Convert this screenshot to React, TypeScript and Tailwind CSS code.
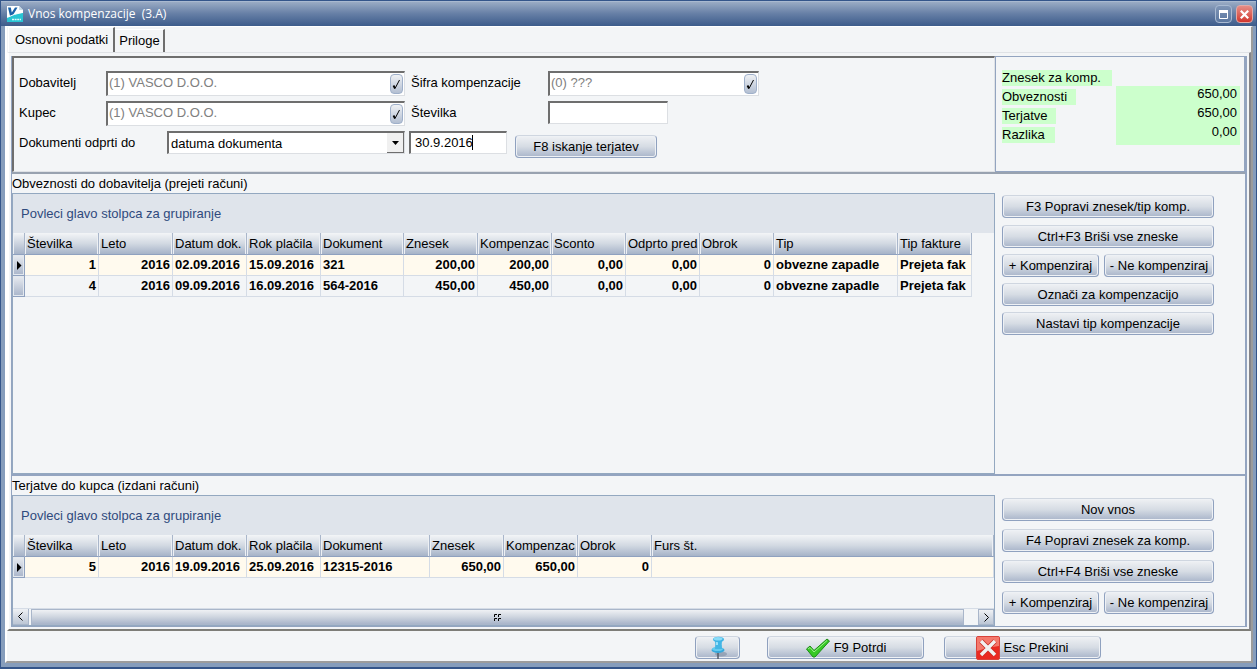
import type { ReactNode } from "react";
import clsx from "clsx";

type Column = { title: string; width: string; right?: boolean };

const payableColumns: Column[] = [
  { title: "Številka", width: "w-[74px]", right: true },
  { title: "Leto", width: "w-[74px]", right: true },
  { title: "Datum dok.", width: "w-[74px]" },
  { title: "Rok plačila", width: "w-[74px]" },
  { title: "Dokument", width: "w-[83px]" },
  { title: "Znesek", width: "w-[74px]", right: true },
  { title: "Kompenzac", width: "w-[74px]", right: true },
  { title: "Sconto", width: "w-[74px]", right: true },
  { title: "Odprto pred", width: "w-[74px]", right: true },
  { title: "Obrok", width: "w-[74px]", right: true },
  { title: "Tip", width: "w-[124px]" },
  { title: "Tip fakture", width: "w-[74px]" },
];

const payableRows = [
  ["1", "2016", "02.09.2016", "15.09.2016", "321", "200,00", "200,00", "0,00", "0,00", "0", "obvezne zapadle", "Prejeta fak"],
  ["4", "2016", "09.09.2016", "16.09.2016", "564-2016", "450,00", "450,00", "0,00", "0,00", "0", "obvezne zapadle", "Prejeta fak"],
];

const receivableColumns: Column[] = [
  { title: "Številka", width: "w-[74px]", right: true },
  { title: "Leto", width: "w-[74px]", right: true },
  { title: "Datum dok.", width: "w-[74px]" },
  { title: "Rok plačila", width: "w-[74px]" },
  { title: "Dokument", width: "w-[109px]" },
  { title: "Znesek", width: "w-[74px]", right: true },
  { title: "Kompenzac", width: "w-[74px]", right: true },
  { title: "Obrok", width: "w-[74px]", right: true },
  { title: "Furs št.", width: "w-auto" },
];

const receivableRows = [
  ["5", "2016", "19.09.2016", "25.09.2016", "12315-2016", "650,00", "650,00", "0", ""],
];

const sunken =
  "border-t-2 border-l-2 border-r border-b border-t-[#6e6e6e] border-l-[#6e6e6e] border-r-[#dcdfe3] border-b-[#dcdfe3] bg-white";

function Button({ children, className, label }: { children: ReactNode; className?: string; label?: string }) {
  return (
    <button
      type="button"
      aria-label={label}
      className={clsx(
        "flex h-[23px] items-center justify-center whitespace-nowrap rounded border border-[#8fa1bf] border-t-[#cfd6e0] bg-gradient-to-b from-[#eff1f4] via-[#d6dce4] to-[#a9b5ca] shadow-[inset_0_0_0_1px_#eef1f5]",
        className
      )}
    >
      {children}
    </button>
  );
}

function Lookup({ id, value, className }: { id: string; value: string; className: string }) {
  return (
    <div className={clsx("flex h-[25px] pr-px", sunken, className)}>
      <input id={id} defaultValue={value} className="h-[18px] min-w-0 flex-1 pl-px text-[#808080] outline-none" />
      <button
        type="button"
        aria-label="Izberi"
        className="mt-px flex h-5 w-[13px] items-center justify-center rounded border border-[#9fb0ca] bg-gradient-to-b from-[#eff1f4] to-[#b3bfd2]"
      >
        <svg width="9" height="13" viewBox="0 0 9 13" fill="none" stroke="#000">
          <path d="M3 10.5 7.500 2" />
          <path d="M1.500 7.500 3 10.500" strokeWidth="1.800" />
        </svg>
      </button>
    </div>
  );
}

function Grid({ columns, rows, label, className }: { columns: Column[]; rows: string[][]; label: string; className: string }) {
  return (
    <table aria-label={label} className={clsx("table-fixed border-separate border-spacing-0", className)}>
      <colgroup>
        <col className="w-3" />
        {columns.map((c) => (
          <col key={c.title} className={c.width} />
        ))}
      </colgroup>
      <thead>
        <tr>
          <th className="h-[22px] border-b border-r border-b-[#8fa1bf] border-r-[#a9b6ca] bg-gradient-to-b from-[#f3f5f7] to-[#a6b3c8] p-0 shadow-[inset_1px_0_0_#edf0f4]"></th>
          {columns.map((c) => (
            <th
              key={c.title}
              className="h-[22px] overflow-hidden whitespace-nowrap border-b border-r border-b-[#8fa1bf] border-r-[#a9b6ca] bg-gradient-to-b from-[#f3f5f7] via-[#d2d9e2] to-[#a6b3c8] p-0 pl-0.5 text-left font-normal shadow-[inset_-1px_0_0_#edf0f4,inset_1px_0_0_#edf0f4]"
            >
              {c.title}
            </th>
          ))}
        </tr>
      </thead>
      <tbody>
        {rows.map((row, i) => (
          <tr key={row[0]} className={i === 0 ? "bg-[#fffaee]" : "bg-[#f3f5f7]"}>
            <td className="h-[21px] border-b border-r border-[#8fa1bf] bg-gradient-to-b from-[#e9ecf1] to-[#a9b5ca] p-0 shadow-[inset_0_0_0_1px_#e3e8ee]">
              {i === 0 && (
                <svg width="11" height="11" viewBox="0 0 11 11">
                  <path d="M4 1v9l4.500-4.500z" />
                </svg>
              )}
            </td>
            {row.map((cell, j) => (
              <td
                key={columns[j].title}
                className={clsx(
                  "h-[21px] overflow-hidden whitespace-nowrap border-b border-r border-[#d5dce6] p-0 font-bold",
                  columns[j].right ? "pr-0.5 text-right" : "pl-0.5"
                )}
              >
                {cell}
              </td>
            ))}
          </tr>
        ))}
      </tbody>
    </table>
  );
}

function GroupBar() {
  return <div className="flex h-[39px] items-center bg-[#dfe4eb] pl-2 text-[#2f4a7d]">Povleci glavo stolpca za grupiranje</div>;
}

function Logo() {
  return (
    <svg width="16" height="16" viewBox="0 0 16 16">
      <path d="M0 0h12l4 4v12H0z" fill="#fff" />
      <path d="M12 0v4h4z" fill="#c9dce8" />
      <path d="M1 1.500h2.800l1 5L8 1.500h2.500L5.500 10H3z" fill="#1c62a8" />
      <path d="M0 12Q8 7 16 7v9H0z" fill="#29c5d3" />
      <path d="M5 13.500h9" stroke="#d8f8fa" strokeWidth="1.500" strokeDasharray="2 .6" />
      <path d="M1 11Q7 8 15 6.500" stroke="#fff" fill="none" />
    </svg>
  );
}

function Pin() {
  return (
    <svg width="20" height="24" viewBox="0 0 20 24">
      <ellipse cx="13" cy="18" rx="6" ry="2.500" fill="#7f8ea4" opacity=".6" />
      <path d="M10 15v8" stroke="#555d68" strokeWidth="1.500" />
      <path d="M7 4h7l-.5 8h-6z" fill="#43b6e6" />
      <path d="M8 4h2v8H8z" fill="#9be2fa" />
      <ellipse cx="10" cy="14" rx="6.500" ry="3" fill="#36a9dc" />
      <ellipse cx="9.500" cy="13" rx="5.500" ry="2" fill="#64cbf0" />
      <path d="M7.500 9h6l.5 4h-7z" fill="#45b6e4" />
      <ellipse cx="10.500" cy="3.500" rx="5.500" ry="2.700" fill="#3fb4e5" />
      <ellipse cx="10" cy="2.800" rx="4.500" ry="1.800" fill="#8adcf8" />
    </svg>
  );
}

function Check() {
  return (
    <svg width="26" height="20" viewBox="0 0 26 20">
      <path d="M1.500 11 5 8l4 4.500L22 1l2.500 2L10 19H8z" fill="#37c926" stroke="#1c8c18" strokeLinejoin="round" />
      <path d="M3 11l2-1.500 4 4.500L22 2.500" fill="none" stroke="#9cf28a" />
    </svg>
  );
}

function Cancel() {
  return (
    <svg width="24" height="24" viewBox="0 0 24 24">
      <rect x=".5" y=".5" width="23" height="23" rx="1.500" fill="#ea2a22" stroke="#d8423a" />
      <path d="M1 1h22v9Q12 11 1 15z" fill="#f4796c" />
      <path d="M5 5l14 14M19 5 5 19" stroke="#c92c25" strokeWidth="5" />
      <path d="M5 5l14 14M19 5 5 19" stroke="#f1f1f1" strokeWidth="3.500" />
    </svg>
  );
}

export default function App() {
  return (
    <div className="flex min-h-screen flex-col border-t border-l border-r border-b-2 border-[#34558a] bg-[#869dbc] font-['Liberation_Sans',Arial,sans-serif] text-[13px] leading-4 text-black">
      <header className="flex h-[25px] shrink-0 items-center border-t border-[#a9b9d0] bg-gradient-to-b from-[#9aabc4] via-[#657ea5] to-[#3d5c8b] pl-1.5 pr-[3px]">
        <Logo />
        <h1 className="ml-[5px] flex-1 whitespace-pre font-['Open_Sans','Noto_Sans',sans-serif] text-xs text-white">Vnos kompenzacije  (3.A)</h1>
        <div className="flex gap-1">
          <button type="button" aria-label="Povečaj" className="flex h-[18px] w-[17px] items-center justify-center rounded-sm border border-[#a9bad2] bg-gradient-to-b from-[#7f95b6] to-[#5b77a0]">
            <svg width="9" height="9" viewBox="0 0 9 9">
              <path d="M.5 1.500h8v7h-8z" fill="none" stroke="#fff" />
              <path d="M0 0h9v3H0z" fill="#fff" />
            </svg>
          </button>
          <button type="button" aria-label="Zapri" className="flex h-[18px] w-[17px] items-center justify-center rounded-sm border border-[#e2a9a6] bg-gradient-to-b from-[#e58c86] to-[#d1332c]">
            <svg width="9" height="9" viewBox="0 0 9 9">
              <path d="M.8.8l7.400 7.400M8.200.8.8 8.200" stroke="#fff" strokeWidth="2.200" />
            </svg>
          </button>
        </div>
      </header>

      <main className="ml-1 mr-[3px] mb-1 flex flex-1 flex-col border-b-2 border-r-2 border-t border-l-2 border-b-[#9c9c9c] border-r-[#9c9c9c] border-t-white border-l-white bg-[#f3f5f7]">
        <div role="tablist" className="flex items-end pl-px">
          <button role="tab" type="button" aria-selected="true" className="h-[25px] border-l border-t border-r-2 border-l-white border-t-white border-r-[#6e6e6e] pl-1.5 pr-[5px]">
            Osnovni podatki
          </button>
          <button role="tab" type="button" aria-selected="false" className="h-[23px] border-r-2 border-t border-r-[#6e6e6e] border-t-white pl-1 pr-[3px]">
            Priloge
          </button>
        </div>

        <div className="flex flex-1 flex-col border-b-2 border-l-2 border-r-2 border-t border-b-[#7d7d78] border-l-white border-r-[#85858a] border-t-[#dfe2e6] px-0.5 pt-[3px] pb-0.5">
          <div className="flex flex-1 flex-col border-b border-l border-r-2 border-[#93a4c0]">
            <div className="flex border-b-2 border-[#98a2b0]">
              <div className="flex h-[116px] flex-1 flex-col gap-1.5 border-b border-l-2 border-r border-t-2 border-b-[#dfe2e6] border-l-[#6e6e6e] border-r-[#dfe2e6] border-t-[#6e6e6e] pt-[13px] pl-[5px]">
                <div className="flex h-6">
                  <label htmlFor="dobavitelj" className="w-[87px] pt-1">Dobavitelj</label>
                  <Lookup id="dobavitelj" value="(1) VASCO D.O.O." className="w-[299px]" />
                  <label htmlFor="sifra" className="ml-1.5 w-[137px] pt-1">Šifra kompenzacije</label>
                  <Lookup id="sifra" value="(0) ???" className="w-[211px]" />
                </div>
                <div className="flex h-6">
                  <label htmlFor="kupec" className="w-[87px] pt-1">Kupec</label>
                  <Lookup id="kupec" value="(1) VASCO D.O.O." className="w-[299px]" />
                  <label htmlFor="stevilka" className="ml-1.5 w-[137px] pt-1">Številka</label>
                  <input id="stevilka" className={clsx("h-[23px] w-[120px] pl-1 outline-none", sunken)} />
                </div>
                <div className="flex h-6">
                  <label htmlFor="datum-tip" className="w-[148px] pt-1">Dokumenti odprti do</label>
                  <div className={clsx("relative h-[23px] w-[238px]", sunken)}>
                    <select id="datum-tip" className="h-[21px] w-full appearance-none pl-0.5 outline-none">
                      <option>datuma dokumenta</option>
                    </select>
                    <span className="pointer-events-none absolute inset-y-0 right-0 flex w-[17px] items-center justify-center border-b border-r border-[#6e6e6e] bg-[#f0f0f0]">
                      <svg width="7" height="4" viewBox="0 0 7 4">
                        <path d="M0 0h7L3.500 4z" />
                      </svg>
                    </span>
                  </div>
                  <div className="relative ml-1">
                    <input aria-label="Datum" defaultValue="30.9.2016" className={clsx("h-[23px] w-[98px] pl-1 pb-0.5 outline-none", sunken)} />
                    <span className="absolute left-[63px] top-1 h-[15px] w-px bg-black" />
                  </div>
                  <Button className="mt-1 ml-2 w-[142px]">F8 iskanje terjatev</Button>
                </div>
              </div>

              <div className="flex w-[250px] border border-[#93a4c0] pt-[13px] pl-1.5">
                <div className="flex w-[114px] flex-col items-start gap-[3px]">
                  <span className="w-[110px] bg-[#ccffcc]">Znesek za komp.</span>
                  <span className="w-[74px] bg-[#ccffcc]">Obveznosti</span>
                  <span className="w-[54px] bg-[#ccffcc]">Terjatve</span>
                  <span className="w-[53px] bg-[#ccffcc]">Razlika</span>
                </div>
                <div className="mt-4 flex h-[59px] w-[124px] flex-col gap-[3px] bg-[#ccffcc] pr-[3px] text-right">
                  <span>650,00</span>
                  <span>650,00</span>
                  <span>0,00</span>
                </div>
              </div>
            </div>

            <section className="flex flex-1 border-b-2 border-[#93a4c0]">
              <div className="flex flex-1 flex-col">
                <h2 className="h-[19px] pt-0.5">Obveznosti do dobavitelja (prejeti računi)</h2>
                <div className="flex-1 border border-[#93a8c0]">
                  <GroupBar />
                  <Grid columns={payableColumns} rows={payableRows} label="Obveznosti do dobavitelja" className="w-[959px]" />
                </div>
              </div>
              <div className="flex w-[250px] flex-col gap-1.5 pt-[21px] pl-[7px]">
                <Button className="mb-px w-[212px]">F3 Popravi znesek/tip komp.</Button>
                <Button className="w-[212px]">Ctrl+F3 Briši vse zneske</Button>
                <div className="flex gap-[5px]">
                  <Button className="w-[97px]">+ Kompenziraj</Button>
                  <Button className="w-[110px]">- Ne kompenziraj</Button>
                </div>
                <Button className="w-[212px]">Označi za kompenzacijo</Button>
                <Button className="w-[212px]">Nastavi tip kompenzacije</Button>
              </div>
            </section>

            <section className="flex">
              <div className="flex flex-1 flex-col">
                <h2 className="h-[19px] pt-0.5">Terjatve do kupca (izdani računi)</h2>
                <div className="flex flex-col border border-[#93a8c0]">
                  <GroupBar />
                  <Grid columns={receivableColumns} rows={receivableRows} label="Terjatve do kupca" className="w-full" />
                  <div className="mt-[30px] flex h-[17px] gap-px border-t border-[#d5dce6]">
                    <button type="button" aria-label="Levo" className="flex w-4 items-center justify-center border-r border-b border-[#a9b6ca] bg-gradient-to-b from-[#eff1f4] to-[#bcc6d5]">
                      <svg width="5" height="9" viewBox="0 0 5 9" fill="none" stroke="#000">
                        <path d="M4.500.5l-4 4 4 4" />
                      </svg>
                    </button>
                    <div className="ml-px flex flex-1 items-center justify-center border border-[#a9b6ca] bg-gradient-to-b from-[#eff1f4] via-[#ced5df] to-[#a9b5ca]">
                      <svg width="7" height="7" viewBox="0 0 7 7" fill="none" stroke="#000">
                        <path d="M3 .5H.5V3M7 .5H4.500V3M3 4.500H.5V7M7 4.500H4.500V7" />
                      </svg>
                    </div>
                    <div className="w-3" />
                    <button type="button" aria-label="Desno" className="flex w-4 items-center justify-center border border-[#a9b6ca] bg-gradient-to-b from-[#eff1f4] to-[#bcc6d5]">
                      <svg width="5" height="9" viewBox="0 0 5 9" fill="none" stroke="#000">
                        <path d="M.5.5l4 4-4 4" />
                      </svg>
                    </button>
                  </div>
                </div>
              </div>
              <div className="flex w-[250px] flex-col gap-2 pt-[22px] pl-[7px]">
                <Button className="w-[212px]">Nov vnos</Button>
                <Button className="w-[212px]">F4 Popravi znesek za komp.</Button>
                <Button className="w-[212px]">Ctrl+F4 Briši vse zneske</Button>
                <div className="flex gap-[5px]">
                  <Button className="w-[97px]">+ Kompenziraj</Button>
                  <Button className="w-[110px]">- Ne kompenziraj</Button>
                </div>
              </div>
            </section>
          </div>
        </div>

        <footer className="flex h-[30px] items-center justify-end pr-[150px] pt-[3px]">
          <Button label="Pripni" className="w-[45px]">
            <Pin />
          </Button>
          <Button className="ml-[27px] w-[157px] gap-[3px]">
            <Check />
            F9 Potrdi
          </Button>
          <Button className="ml-5 w-[157px] gap-[3px]">
            <Cancel />
            Esc Prekini
          </Button>
        </footer>
      </main>
    </div>
  );
}
